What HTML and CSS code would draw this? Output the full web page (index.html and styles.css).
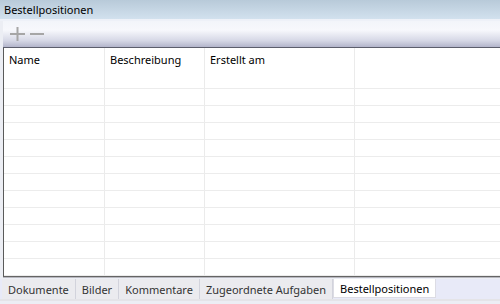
FILE: index.html
```html
<!DOCTYPE html>
<html>
<head>
<meta charset="utf-8">
<link rel="stylesheet" href="styles.css">
</head>
<body>
<div class="app">
  <div class="title">Bestellpositionen</div>
  <div class="title-sep"></div>
  <div class="panel">
    <div class="toolbar">
      <svg class="tb-icon" width="40" height="16" viewBox="0 0 40 16">
        <rect x="6" y="7" width="15" height="2" fill="#a6a6a6"/>
        <rect x="12.5" y="1" width="2" height="14" fill="#a6a6a6"/>
        <rect x="26" y="7" width="16" height="2" fill="#a6a6a6"/>
      </svg>
    </div>
    <div class="grid">
      <div class="row head">
        <div class="cell c1">Name</div>
        <div class="cell c2">Beschreibung</div>
        <div class="cell c3">Erstellt am</div>
        <div class="cell c4"></div>
      </div>
      <div class="row"><div class="cell c1"></div><div class="cell c2"></div><div class="cell c3"></div><div class="cell c4"></div></div>
      <div class="row"><div class="cell c1"></div><div class="cell c2"></div><div class="cell c3"></div><div class="cell c4"></div></div>
      <div class="row"><div class="cell c1"></div><div class="cell c2"></div><div class="cell c3"></div><div class="cell c4"></div></div>
      <div class="row"><div class="cell c1"></div><div class="cell c2"></div><div class="cell c3"></div><div class="cell c4"></div></div>
      <div class="row"><div class="cell c1"></div><div class="cell c2"></div><div class="cell c3"></div><div class="cell c4"></div></div>
      <div class="row"><div class="cell c1"></div><div class="cell c2"></div><div class="cell c3"></div><div class="cell c4"></div></div>
      <div class="row"><div class="cell c1"></div><div class="cell c2"></div><div class="cell c3"></div><div class="cell c4"></div></div>
      <div class="row"><div class="cell c1"></div><div class="cell c2"></div><div class="cell c3"></div><div class="cell c4"></div></div>
      <div class="row"><div class="cell c1"></div><div class="cell c2"></div><div class="cell c3"></div><div class="cell c4"></div></div>
      <div class="row"><div class="cell c1"></div><div class="cell c2"></div><div class="cell c3"></div><div class="cell c4"></div></div>
      <div class="row"><div class="cell c1"></div><div class="cell c2"></div><div class="cell c3"></div><div class="cell c4"></div></div>
      <div class="row"><div class="cell c1"></div><div class="cell c2"></div><div class="cell c3"></div><div class="cell c4"></div></div>
    </div>
  </div>
  <div class="tabs">
    <div class="tab">Dokumente</div>
    <div class="tab">Bilder</div>
    <div class="tab">Kommentare</div>
    <div class="tab">Zugeordnete Aufgaben</div>
    <div class="tab active">Bestellpositionen</div>
  </div>
</div>
</body>
</html>
```

FILE: styles.css
```css
* { box-sizing: border-box; }
html, body { margin: 0; padding: 0; }
body {
  width: 500px;
  height: 304px;
  overflow: hidden;
  background: #eceef4;
  font-family: "Noto Sans", "DejaVu Sans", sans-serif;
  font-size: 11px;
  color: #000;
}
.app { width: 500px; height: 304px; display: flex; flex-direction: column; }
.title {
  height: 19px;
  line-height: 19px;
  padding-left: 4px;
  background: linear-gradient(#b8cad9, #d2e1ee);
}
.title-sep { height: 2px; background: #eef1f8; }
.panel {
  margin-left: 3px;
  display: flex;
  flex-direction: column;
}
.toolbar {
  height: 27px;
  background: linear-gradient(#f3f5fa 0%, #f7f8fc 35%, #d6d8e6 75%, #b3b5cb 100%);
  border-bottom: 1px solid #5c5e6c;
  display: flex;
  align-items: center;
  padding-left: 1px;
}
.tb-icon { display: block; }
.grid {
  height: 229px;
  background: #fff;
  border-left: 1px solid #5a5a5a;
  border-bottom: 1px solid #646464;
  box-shadow: 0 1px 0 #b8b8c0;
  overflow: hidden;
}
.row { display: flex; height: 17px; border-bottom: 1px solid #ececec; }
.row.head { height: 24px; border-bottom: none; align-items: stretch; }
.cell { border-right: 1px solid #ebebeb; padding-left: 5px; }
.head .cell { line-height: 23px; }
.c1 { width: 101px; }
.c2 { width: 100px; }
.c3 { width: 150px; }
.c4 { flex: 1; border-right: none; }
.tabs {
  margin-top: 2px;
  height: 22px;
  display: flex;
  align-items: stretch;
  background: #e8eaf8;
  padding-left: 2px;
  border-bottom: 2px solid #e4e4e8;
}
.tab {
  padding: 0 6px;
  line-height: 21px;
  color: #333;
  background: #ebebef;
  border-right: 1px solid #d2d3dc;
}
.tab.active {
  background: #fff;
  color: #000;
  border: 1px solid #dcdce4;
  border-top: none;
  margin-bottom: 1px;
  line-height: 20px;
}
```
